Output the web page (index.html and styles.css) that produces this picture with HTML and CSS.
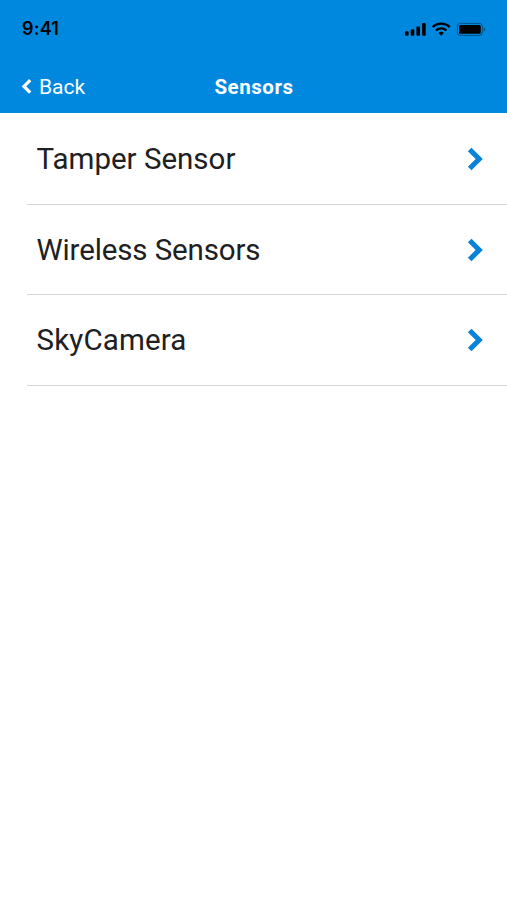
FILE: index.html
```html
<!DOCTYPE html>
<html lang="en">
<head>
<meta charset="utf-8">
<title>Sensors</title>
<link rel="stylesheet" href="styles.css">
</head>
<body>
<header class="header">
  <div class="status">
    <span class="time">9:41</span>
    <svg class="status-icons" width="82" height="18" viewBox="0 0 82 18" aria-hidden="true">
      <rect x="1" y="11.3" width="3.6" height="4.4" rx="1"/>
      <rect x="6.7" y="9.3" width="3.6" height="6.4" rx="1"/>
      <rect x="12.4" y="6.4" width="3.6" height="9.3" rx="1"/>
      <rect x="18.1" y="3" width="3.6" height="12.7" rx="1"/>
      <g fill="none" stroke="#000" stroke-width="2.3">
        <path d="M28.7 7.1a12.2 12.2 0 0 1 17 0"/>
        <path d="M32 10.5a7.6 7.6 0 0 1 10.4 0"/>
      </g>
      <path d="M34.5 12.9a4.2 4.2 0 0 1 5.4 0L37.2 15.7z"/>
      <rect x="53.4" y="3.4" width="25" height="12" rx="3" fill="none" stroke="#000" stroke-opacity=".4"/>
      <rect x="55" y="5" width="21.8" height="8.8" rx="1.6"/>
      <path d="M79.8 7.4v4q1.4-.7 1.4-2t-1.4-2z" fill-opacity=".45"/>
    </svg>
  </div>
  <nav class="nav">
    <a class="back">
      <svg width="12" height="18" viewBox="0 0 12 18" aria-hidden="true"><path d="M10.2 2.2 4 8.4l6.2 6.2" fill="none" stroke="#fff" stroke-width="3.3"/></svg>
      <span class="back-label">Back</span>
    </a>
    <h1 class="title">Sensors</h1>
  </nav>
</header>
<main class="list">
  <a class="row"><span class="label tamper">Tamper Sensor</span><svg class="chevron" width="17" height="24" viewBox="0 0 17 24" aria-hidden="true"><path d="m2.7 2.5 9.5 9.5-9.5 9.5"/></svg></a>
  <a class="row"><span class="label wireless">Wireless Sensors</span><svg class="chevron" width="17" height="24" viewBox="0 0 17 24" aria-hidden="true"><path d="m2.7 2.5 9.5 9.5-9.5 9.5"/></svg></a>
  <a class="row"><span class="label camera">SkyCamera</span><svg class="chevron" width="17" height="24" viewBox="0 0 17 24" aria-hidden="true"><path d="m2.7 2.5 9.5 9.5-9.5 9.5"/></svg></a>
</main>
</body>
</html>
```
FILE: styles.css
```css
* { box-sizing: border-box; }
body {
  margin: 0;
  min-height: 900px;
  background: #fff;
  color: #202022;
  font-family: Roboto, "Liberation Sans", sans-serif;
}
.header { height: 113px; background: #0088df; }
.status {
  display: flex;
  align-items: center;
  justify-content: space-between;
  height: 58px;
  padding: 0 21px 0 22px;
}
.time {
  color: #000;
  font: 600 18px/22px Inter, sans-serif;
  letter-spacing: .2px;
}
.status-icons { fill: #000; }
.nav {
  display: grid;
  grid-template-columns: 1fr auto 1fr;
  align-items: center;
  height: 55px;
  padding: 2px 19px 0 20px;
  color: #fff;
}
.back { display: flex; align-items: center; gap: 7px; }
.back-label { font-size: 21px; line-height: 26px; }
.title { margin: 0; font-size: 20.5px; line-height: 26px; font-weight: 700; letter-spacing: .55px; }
.row {
  display: flex;
  align-items: center;
  justify-content: space-between;
  height: 90.4px;
  margin-left: 27px;
  padding: 1px 23px 0 9.5px;
  border-bottom: 1px solid #d5d5d6;
}
.row:first-child { height: 91.8px; padding-top: 2px; }
.label { font-size: 29.5px; line-height: 36px; white-space: nowrap; }
.tamper { letter-spacing: 0; }
.wireless { letter-spacing: -.13px; }
.camera { letter-spacing: .15px; }
.chevron { fill: none; stroke: #0983d8; stroke-width: 5.1; }
```
